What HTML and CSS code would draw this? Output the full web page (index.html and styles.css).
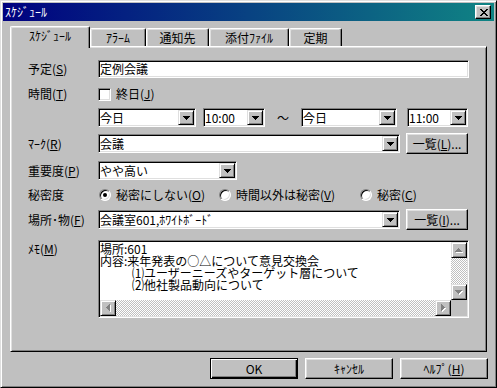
FILE: index.html
```html
<!DOCTYPE html>
<html lang="ja">
<head>
<meta charset="utf-8">
<title>スケジュール</title>
<link rel="stylesheet" href="styles.css">
</head>
<body>
<div class="window">
  <div class="titlebar">
    <span class="title">ｽｹｼﾞｭｰﾙ</span>
    <span class="close"><svg width="8" height="7" viewBox="0 0 8 7"><path d="M0 0h2v1h-2zM6 0h2v1h-2zM1 1h2v1h-2zM5 1h2v1h-2zM2 2h4v1h-4zM3 3h2v1h-2zM2 4h4v1h-4zM1 5h2v1h-2zM5 5h2v1h-2zM0 6h2v1h-2zM6 6h2v1h-2z" fill="#000"/></svg></span>
  </div>
  <div class="tabs">
    <div class="tab active tw1">ｽｹｼﾞｭｰﾙ</div>
    <div class="tab tw2">ｱﾗｰﾑ</div>
    <div class="tab tw3">通知先</div>
    <div class="tab tw4">添付ﾌｧｲﾙ</div>
    <div class="tab tw5">定期</div>
  </div>
  <div class="panel">
    <div class="row r1">
      <span class="lbl">予定(<u>S</u>)</span>
      <div class="edit wfull">定例会議</div>
    </div>
    <div class="row r2">
      <span class="lbl">時間(<u>T</u>)</span>
      <span class="check"></span>
      <span>終日(<u>J</u>)</span>
    </div>
    <div class="row r3">
      <span class="lbl"></span>
      <div class="combo wday1"><span class="val">今日</span><span class="dd"><svg width="7" height="4" viewBox="0 0 7 4"><path d="M0 0h7v1h-1v1h-1v1h-1v1h-1v-1h-1v-1h-1v-1h-1z" fill="#000"/></svg></span></div>
      <div class="combo wtime1"><span class="val">10:00</span><span class="dd"><svg width="7" height="4" viewBox="0 0 7 4"><path d="M0 0h7v1h-1v1h-1v1h-1v1h-1v-1h-1v-1h-1v-1h-1z" fill="#000"/></svg></span></div>
      <span class="tilde">～</span>
      <div class="combo wday2"><span class="val">今日</span><span class="dd"><svg width="7" height="4" viewBox="0 0 7 4"><path d="M0 0h7v1h-1v1h-1v1h-1v1h-1v-1h-1v-1h-1v-1h-1z" fill="#000"/></svg></span></div>
      <div class="combo wtime2"><span class="val">11:00</span><span class="dd"><svg width="7" height="4" viewBox="0 0 7 4"><path d="M0 0h7v1h-1v1h-1v1h-1v1h-1v-1h-1v-1h-1v-1h-1z" fill="#000"/></svg></span></div>
    </div>
    <div class="row r4">
      <span class="lbl">ﾏｰｸ(<u>R</u>)</span>
      <div class="combo wwide"><span class="val">会議</span><span class="dd"><svg width="7" height="4" viewBox="0 0 7 4"><path d="M0 0h7v1h-1v1h-1v1h-1v1h-1v-1h-1v-1h-1v-1h-1z" fill="#000"/></svg></span></div>
      <span class="btn list">一覧(<u>L</u>)...</span>
    </div>
    <div class="row r5">
      <span class="lbl">重要度(<u>P</u>)</span>
      <div class="combo wprio"><span class="val">やや高い</span><span class="dd"><svg width="7" height="4" viewBox="0 0 7 4"><path d="M0 0h7v1h-1v1h-1v1h-1v1h-1v-1h-1v-1h-1v-1h-1z" fill="#000"/></svg></span></div>
    </div>
    <div class="row r6">
      <span class="lbl">秘密度</span>
      <span class="ropt o1"><span class="radio on"></span>秘密にしない(<u>O</u>)</span>
      <span class="ropt o2"><span class="radio"></span>時間以外は秘密(<u>V</u>)</span>
      <span class="ropt o3"><span class="radio"></span>秘密(<u>C</u>)</span>
    </div>
    <div class="row r7">
      <span class="lbl">場所･物(<u>F</u>)</span>
      <div class="combo wwide"><span class="val">会議室601,ﾎﾜｲﾄﾎﾞｰﾄﾞ</span><span class="dd"><svg width="7" height="4" viewBox="0 0 7 4"><path d="M0 0h7v1h-1v1h-1v1h-1v1h-1v-1h-1v-1h-1v-1h-1z" fill="#000"/></svg></span></div>
      <span class="btn list">一覧(<u>I</u>)...</span>
    </div>
    <div class="row r8">
      <span class="lbl memolbl">ﾒﾓ(<u>M</u>)</span>
      <div class="memo">
        <div class="memotext">
          <div>場所:601</div>
          <div>内容:来年発表の○△について意見交換会</div>
          <div class="indent">⑴ユーザーニーズやターゲット層について</div>
          <div class="indent">⑵他社製品動向について</div>
        </div>
        <div class="vsb">
          <span class="sbtn"><svg width="8" height="5" viewBox="0 0 8 5"><path transform="translate(1 1)" d="M3 0h1v1h1v1h1v1h1v1h-7v-1h1v-1h1v-1h1z" fill="#fff"/><path d="M3 0h1v1h1v1h1v1h1v1h-7v-1h1v-1h1v-1h1z" fill="#808080"/></svg></span>
          <span class="track"></span>
          <span class="sbtn"><svg width="8" height="5" viewBox="0 0 8 5"><path transform="translate(1 1)" d="M0 0h7v1h-1v1h-1v1h-1v1h-1v-1h-1v-1h-1v-1h-1z" fill="#fff"/><path d="M0 0h7v1h-1v1h-1v1h-1v1h-1v-1h-1v-1h-1v-1h-1z" fill="#808080"/></svg></span>
        </div>
        <div class="hsb">
          <span class="sbtn"><svg width="5" height="8" viewBox="0 0 5 8"><path transform="translate(1 1)" d="M3 0h1v7h-1v-1h-1v-1h-1v-1h-1v-1h1v-1h1v-1h1z" fill="#fff"/><path d="M3 0h1v7h-1v-1h-1v-1h-1v-1h-1v-1h1v-1h1v-1h1z" fill="#808080"/></svg></span>
          <span class="track"></span>
          <span class="sbtn"><svg width="5" height="8" viewBox="0 0 5 8"><path transform="translate(1 1)" d="M0 0h1v1h1v1h1v1h1v1h-1v1h-1v1h-1v1h-1z" fill="#fff"/><path d="M0 0h1v1h1v1h1v1h1v1h-1v1h-1v1h-1v1h-1z" fill="#808080"/></svg></span>
        </div>
        <div class="corner"></div>
      </div>
    </div>
  </div>
  <div class="buttons">
    <span class="btn dlg default">OK</span>
    <span class="btn dlg">ｷｬﾝｾﾙ</span>
    <span class="btn dlg">ﾍﾙﾌﾟ(<u>H</u>)</span>
  </div>
</div>
</body>
</html>
```
FILE: styles.css
```css
* { box-sizing: border-box; }
html, body { margin: 0; padding: 0; }
body {
  font: 12px/14px "Noto Sans CJK JP", "Noto Sans", sans-serif;
  color: #000;
  background: #c0c0c0;
}
u { text-decoration: underline; text-underline-offset: 1px; }

.window {
  width: 497px;
  height: 388px;
  background: #c0c0c0;
  border: 1px solid;
  border-color: #dfdfdf #000 #000 #dfdfdf;
  box-shadow: inset 1px 1px #fff, inset -1px -1px #808080;
  padding: 2px;
  display: flex;
  flex-direction: column;
}

.titlebar {
  flex: none;
  height: 18px;
  background: linear-gradient(90deg, #000080, #108484);
  display: flex;
  align-items: center;
  padding-left: 2px;
  color: #fff;
}
.close {
  margin-left: auto;
  margin-right: 3px;
  width: 16px;
  height: 14px;
  background: #c0c0c0;
  border: 1px solid;
  border-color: #fff #000 #000 #fff;
  box-shadow: inset -1px -1px #808080, inset 1px 1px #dfdfdf;
  display: flex;
  align-items: center;
  justify-content: center;
  padding-left: 1px;
}
.close svg { display: block; }

.tabs {
  flex: none;
  display: flex;
  align-items: flex-end;
  height: 20px;
  margin-top: 5px;
  margin-left: 7px;
}
.tab {
  flex: none;
  height: 18px;
  border-top: 1px solid #fff;
  border-left: 1px solid #fff;
  border-right: 1px solid #000;
  border-radius: 2px 2px 0 0;
  box-shadow: inset -1px 0 #808080, inset 1px 1px #dfdfdf;
  display: flex;
  align-items: center;
  justify-content: center;
  padding-top: 1px;
  white-space: nowrap;
}
.tab.active {
  height: 22px;
  margin-bottom: -2px;
  position: relative;
  z-index: 1;
  background: #c0c0c0;
  padding-top: 0;
  padding-bottom: 3px;
}
.tw1 { width: 80px; }
.tw2 { width: 56px; }
.tw3 { width: 63px; }
.tw4 { width: 80px; }
.tw5 { width: 53px; }

.panel {
  flex: none;
  width: 477px;
  height: 306px;
  margin-left: 7px;
  border: 1px solid;
  border-color: #fff #000 #000 #fff;
  box-shadow: inset 1px 1px #dfdfdf, inset -1px -1px #808080;
  padding: 13px 0 0 17px;
  display: flex;
  flex-direction: column;
}

.row { display: flex; align-items: center; flex: none; white-space: nowrap; }
.r1 { height: 18px; }
.r2 { height: 16px; margin-top: 8px; }
.r3 { height: 19px; margin-top: 6px; }
.r4 { height: 21px; margin-top: 6px; }
.r5 { height: 19px; margin-top: 7px; }
.r6 { height: 13px; margin-top: 8px; }
.r7 { height: 21px; margin-top: 8px; }
.r8 { height: 78px; margin-top: 10px; align-items: flex-start; }

.lbl { flex: none; width: 70px; }
.memolbl { padding-top: 2px; }

.edit, .combo {
  flex: none;
  background: #fff;
  border: 1px solid;
  border-color: #808080 #fff #fff #808080;
  box-shadow: inset 1px 1px #000, inset -1px -1px #dfdfdf;
  padding: 1px;
  display: flex;
  align-items: center;
}
.edit { height: 18px; }
.wfull { width: 371px; }
.combo { height: 19px; }
.combo .val { flex: 1; min-width: 0; }
.wday1 { width: 98px; margin-right: 7px; }
.wtime1 { width: 62px; }
.tilde { flex: none; width: 36px; text-align: center; }
.wday2 { width: 96px; margin-right: 10px; }
.wtime2 { width: 61px; }
.wwide { width: 302px; margin-right: 6px; }
.wprio { width: 139px; }

.dd {
  flex: none;
  width: 16px;
  height: 15px;
  background: #c0c0c0;
  border: 1px solid;
  border-color: #dfdfdf #000 #000 #dfdfdf;
  box-shadow: inset 1px 1px #fff, inset -1px -1px #808080;
  display: flex;
  align-items: center;
  justify-content: center;
}
.dd svg { display: block; }

.check {
  flex: none;
  width: 13px;
  height: 13px;
  background: #fff;
  border: 1px solid;
  border-color: #808080 #fff #fff #808080;
  box-shadow: inset 1px 1px #000, inset -1px -1px #dfdfdf;
  margin-right: 5px;
}

.ropt { display: flex; align-items: center; flex: none; }
.o1 { width: 120px; }
.o2 { width: 141px; }
.radio {
  flex: none;
  width: 12px;
  height: 12px;
  margin-left: 1px;
  margin-right: 5px;
  border-radius: 50%;
  background: #fff;
  border: 1px solid;
  border-color: #808080 #fff #fff #808080;
  box-shadow: inset 1px 1px #000, inset -1px -1px #dfdfdf;
  display: flex;
  align-items: center;
  justify-content: center;
}
.radio.on::after {
  content: "";
  width: 4px;
  height: 4px;
  border-radius: 50%;
  background: #000;
}

.btn {
  flex: none;
  height: 21px;
  background: #c0c0c0;
  border: 1px solid;
  border-color: #fff #000 #000 #fff;
  box-shadow: inset -1px -1px #808080, inset 1px 1px #dfdfdf;
  display: flex;
  align-items: center;
  justify-content: center;
  white-space: nowrap;
}
.list { width: 62px; }

.memo {
  flex: none;
  width: 371px;
  height: 78px;
  background: #fff;
  border: 1px solid;
  border-color: #808080 #fff #fff #808080;
  box-shadow: inset 1px 1px #000, inset -1px -1px #dfdfdf;
  padding: 1px;
  display: grid;
  grid-template-columns: 1fr 16px;
  grid-template-rows: 1fr 16px;
}
.memotext {
  line-height: 12px;
  padding-top: 1px;
  white-space: nowrap;
}
.indent { padding-left: 32px; }
.vsb { display: flex; flex-direction: column; }
.hsb { display: flex; }
.track {
  flex: 1;
  background: repeating-conic-gradient(#c0c0c0 0% 25%, #fff 0% 50%) 0 0 / 2px 2px;
}
.sbtn {
  flex: none;
  width: 16px;
  height: 16px;
  background: #c0c0c0;
  border: 1px solid;
  border-color: #dfdfdf #000 #000 #dfdfdf;
  box-shadow: inset 1px 1px #fff, inset -1px -1px #808080;
  display: flex;
  align-items: center;
  justify-content: center;
}
.sbtn svg { display: block; }
.corner { background: #c0c0c0; }

.buttons {
  flex: none;
  display: flex;
  justify-content: flex-end;
  gap: 7px;
  margin-top: 6px;
  margin-right: 6px;
}
.dlg { width: 88px; }
.default {
  border-color: #000;
  box-shadow: inset 1px 1px #fff, inset -1px -1px #000, inset -2px -2px #808080;
}
```
